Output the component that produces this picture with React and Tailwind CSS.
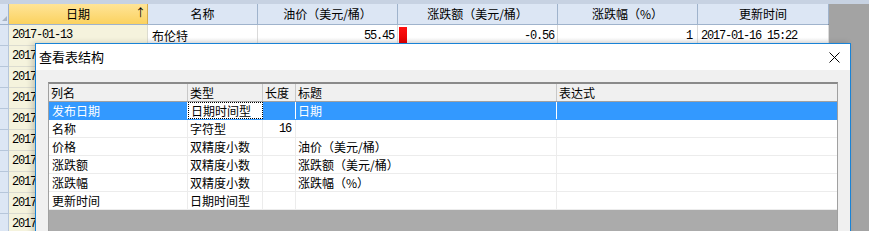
import React from 'react';

const cjk = '"Noto Sans CJK SC", "Noto Sans", sans-serif';
const mono = '"Liberation Mono", "Noto Sans CJK SC", monospace';

const bgCols = [
  { title: '日期', w: 'w-[139px]' },
  { title: '名称', w: 'w-[110px]' },
  { title: '油价（美元/桶）', w: 'w-[140px]' },
  { title: '涨跌额（美元/桶）', w: 'w-[160px]' },
  { title: '涨跌幅（%）', w: 'w-[140px]' },
  { title: '更新时间', w: 'w-[131px]' },
];

// rows hidden behind the dialog: only the year shows at the left
const years = ['r2', 'r3', 'r4', 'r5', 'r6', 'r7', 'r8', 'r9', 'r10'];

const fields = [
  ['发布日期', '日期时间型', '', '日期'],
  ['名称', '字符型', '16', ''],
  ['价格', '双精度小数', '', '油价（美元/桶）'],
  ['涨跌额', '双精度小数', '', '涨跌额（美元/桶）'],
  ['涨跌幅', '双精度小数', '', '涨跌幅（%）'],
  ['更新时间', '日期时间型', '', ''],
];

function HeaderRow() {
  return (
    <div className="flex h-[21px] border-b border-[#9fb3cc]">
      <div className="relative w-[9px] shrink-0 bg-[#dce6f4] border-r border-[#9fb3cc]">
        <div className="absolute right-[1px] bottom-[3px] w-0 h-0 border-l-[5px] border-l-transparent border-b-[5px] border-b-[#a8b4c4]" />
      </div>
      {bgCols.map((c, i) => (
        <div
          key={c.title}
          className={`${c.w} shrink-0 relative flex items-center justify-center text-[12px] leading-none text-black border-r ${
            i === 0
              ? 'bg-gradient-to-b from-[#ffe496] to-[#fbd25e] border-[#d6ac4a]'
              : 'bg-[#dce6f4] border-[#9fb3cc]'
          }`}
        >
          {c.title}
          {i === 0 && <span className="absolute right-[1px] top-[3px] text-[11px]">↑</span>}
        </div>
      ))}
    </div>
  );
}

function FirstRow() {
  return (
    <div className="flex h-[21px] text-[12px] tracking-[-1.2px]" style={{ fontFamily: mono }}>
      <div className="w-[9px] shrink-0 bg-[#dce6f4] border-r border-b border-[#b6c6da]" />
      <div className="w-[139px] shrink-0 bg-[#f5f3dd] border-r border-b border-[#dcdcd0] flex items-center pl-[3px]">
        2017-01-13
      </div>
      <div className="w-[110px] shrink-0 bg-gradient-to-b from-white from-60% to-[#e8e8e8] border-r border-[#dadada] flex items-center pl-[4px] tracking-normal" style={{ fontFamily: cjk }}>
        布伦特
      </div>
      <div className="w-[140px] shrink-0 bg-gradient-to-b from-white from-60% to-[#e8e8e8] border-r border-[#dadada] flex items-center justify-end pr-[3px]">
        55.45
      </div>
      <div className="w-[160px] shrink-0 bg-gradient-to-b from-white from-60% to-[#e8e8e8] border-r border-[#dadada] flex items-center">
        <div className="ml-[1px] w-[8px] h-[17px] bg-gradient-to-b from-[#ff1010] to-[#e00000]" />
        <span className="ml-auto pr-[3px]">-0.56</span>
      </div>
      <div className="w-[140px] shrink-0 bg-gradient-to-b from-white from-60% to-[#e8e8e8] border-r border-[#dadada] flex items-center justify-end pr-[5px]">
        1
      </div>
      <div className="w-[131px] shrink-0 bg-gradient-to-b from-white from-60% to-[#e8e8e8] border-r border-[#dadada] flex items-center pl-[3px]">
        2017-01-16 15:22
      </div>
    </div>
  );
}

function DataRow() {
  return (
    <div className="flex h-[21px] text-[12px] tracking-[-1.2px]" style={{ fontFamily: mono }}>
      <div className="w-[9px] shrink-0 bg-[#dce6f4] border-r border-b border-[#b6c6da]" />
      <div className="w-[139px] shrink-0 bg-[#f5f3dd] border-r border-b border-[#dcdcd0] flex items-center pl-[3px]">
        <span className="w-[24px] overflow-hidden whitespace-nowrap">2017</span>
      </div>
      <div className="flex-1 bg-white" />
    </div>
  );
}

function FieldTable() {
  const widths = ['w-[139px]', 'w-[75px]', 'w-[33px]', 'w-[261px]'];
  return (
    <div className="w-[790px] h-[149px] flex flex-col border-t-2 border-t-[#8a8a8a] border-x border-x-[#a0a0a0] bg-[#ababab]">
      <div className="flex h-[18px] bg-[#f0f0f0] border-b border-[#a0a0a0] text-[12px] leading-none">
        {['列名', '类型', '长度', '标题'].map((h, i) => (
          <div key={h} className={`${widths[i]} shrink-0 border-r border-[#c8c8c8] flex items-center pl-[2px]`}>
            {h}
          </div>
        ))}
        <div className="flex-1 flex items-center pl-[2px]">表达式</div>
      </div>
      {fields.map((r, ri) => {
        const sel = ri === 0;
        return (
          <div key={r[0]} className={`flex h-[18px] text-[12px] leading-none border-b ${sel ? 'bg-[#3399ff] border-[#3399ff]' : 'bg-white border-[#ececec]'}`}>
            <div className={`w-[139px] shrink-0 flex items-center pl-[3px] border-r ${sel ? 'text-white border-white' : 'border-[#ececec]'}`}>
              {r[0]}
            </div>
            <div className={`w-[75px] shrink-0 flex items-center pl-[2px] ${sel ? 'bg-white border border-dotted border-black' : 'border-r border-[#ececec]'}`}>
              {r[1]}
            </div>
            <div className={`w-[33px] shrink-0 flex items-center justify-end pr-[4px] border-r ${sel ? 'border-white' : 'border-[#ececec]'}`} style={{ fontFamily: mono }}>
              <span className="text-[12px] tracking-[-1.2px]">{r[2]}</span>
            </div>
            <div className={`w-[261px] shrink-0 flex items-center pl-[2px] border-r ${sel ? 'text-white border-white' : 'border-[#ececec]'}`}>
              {r[3]}
            </div>
            <div className="flex-1" />
          </div>
        );
      })}
    </div>
  );
}

export default function App() {
  return (
    <div className="relative w-[869px] h-[231px] overflow-hidden bg-[#a3a3a3]" style={{ fontFamily: cjk }}>
      <div className="h-[4px] bg-[#c7d2e2]" />
      <div className="w-[829px] border-r border-[#7f8a99] bg-white">
        <HeaderRow />
        <FirstRow />
        {years.map((k) => (
          <DataRow key={k} />
        ))}
      </div>

      <div className="absolute left-[35px] top-[43px] w-[816px] h-[200px] flex flex-col border border-[#1883d7] bg-[#f0f0f0] shadow-[-3px_0_6px_rgba(0,0,0,0.18)]">
        <div className="h-[26px] shrink-0 bg-white flex items-center justify-between pl-[3px] pr-[10px]">
          <span className="text-[13px] text-black">查看表结构</span>
          <svg width="11" height="11" viewBox="0 0 11 11">
            <path d="M0.5 0.5 L10.5 10.5 M10.5 0.5 L0.5 10.5" stroke="#000" strokeWidth="1" fill="none" />
          </svg>
        </div>
        <div className="pt-[12px] pl-[12px]">
          <FieldTable />
        </div>
      </div>
    </div>
  );
}
